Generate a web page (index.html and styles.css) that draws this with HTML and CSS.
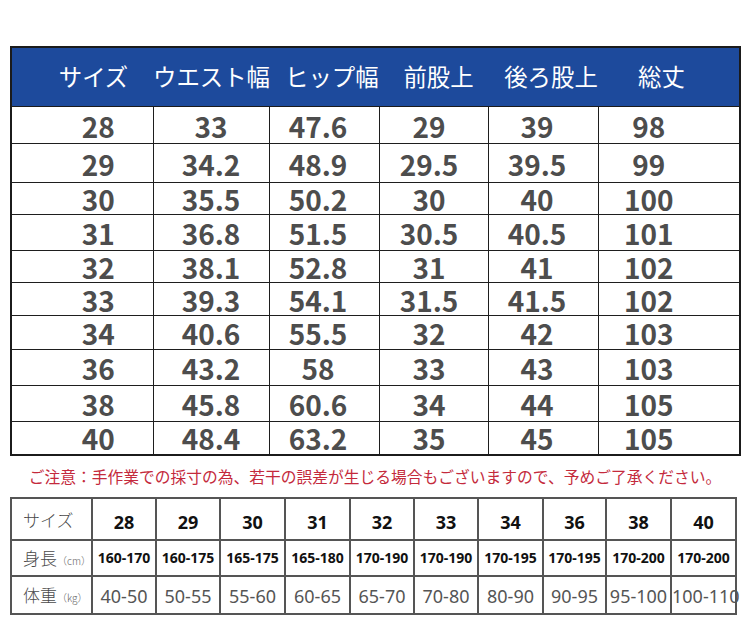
FILE: index.html
```html
<!DOCTYPE html>
<html lang="ja">
<head>
<meta charset="utf-8">
<title>サイズ表</title>
<link rel="stylesheet" href="styles.css">
</head>
<body>
<div class="page">
  <table class="chart">
    <colgroup>
      <col class="w1"><col class="w2"><col class="w3"><col class="w4"><col class="w5"><col class="w6">
    </colgroup>
    <thead>
      <tr><th>サイズ</th><th>ウエスト幅</th><th>ヒップ幅</th><th>前股上</th><th>後ろ股上</th><th>総丈</th></tr>
    </thead>
    <tbody>
      <tr><td>28</td><td>33</td><td>47.6</td><td>29</td><td>39</td><td>98</td></tr>
      <tr><td>29</td><td>34.2</td><td>48.9</td><td>29.5</td><td>39.5</td><td>99</td></tr>
      <tr><td>30</td><td>35.5</td><td>50.2</td><td>30</td><td>40</td><td>100</td></tr>
      <tr><td>31</td><td>36.8</td><td>51.5</td><td>30.5</td><td>40.5</td><td>101</td></tr>
      <tr><td>32</td><td>38.1</td><td>52.8</td><td>31</td><td>41</td><td>102</td></tr>
      <tr><td>33</td><td>39.3</td><td>54.1</td><td>31.5</td><td>41.5</td><td>102</td></tr>
      <tr><td>34</td><td>40.6</td><td>55.5</td><td>32</td><td>42</td><td>103</td></tr>
      <tr><td>36</td><td>43.2</td><td>58</td><td>33</td><td>43</td><td>103</td></tr>
      <tr><td>38</td><td>45.8</td><td>60.6</td><td>34</td><td>44</td><td>105</td></tr>
      <tr><td>40</td><td>48.4</td><td>63.2</td><td>35</td><td>45</td><td>105</td></tr>
    </tbody>
  </table>
  <p class="note">ご注意：手作業での採寸の為、若干の誤差が生じる場合もございますので、予めご了承ください。</p>
  <table class="fit">
    <colgroup>
      <col class="f0"><col class="f1"><col class="f1"><col class="f2"><col class="f2"><col class="f1"><col class="f1"><col class="f2"><col class="f3"><col class="f2"><col class="f2">
    </colgroup>
    <tr class="row-size">
      <th>サイズ</th><td>28</td><td>29</td><td>30</td><td>31</td><td>32</td><td>33</td><td>34</td><td>36</td><td>38</td><td>40</td>
    </tr>
    <tr class="row-height">
      <th>身長<span class="unit">（cm）</span></th><td>160-170</td><td>160-175</td><td>165-175</td><td>165-180</td><td>170-190</td><td>170-190</td><td>170-195</td><td>170-195</td><td>170-200</td><td>170-200</td>
    </tr>
    <tr class="row-weight">
      <th>体重<span class="unit">（kg）</span></th><td>40-50</td><td>50-55</td><td>55-60</td><td>60-65</td><td>65-70</td><td>70-80</td><td>80-90</td><td>90-95</td><td>95-100</td><td>100-110</td>
    </tr>
  </table>
</div>
</body>
</html>
```
FILE: styles.css
```css
html, body {
  margin: 0;
  padding: 0;
  background: #ffffff;
}

.page {
  width: 750px;
  padding: 46px 0 0 10px;
  box-sizing: border-box;
}

/* ---------- main size chart ---------- */
.chart {
  border-collapse: collapse;
  table-layout: fixed;
  width: 729px;
  border: 2px solid #1b1b1b;
  font-family: "Noto Sans CJK JP", "Noto Sans", sans-serif;
}

.chart .w1 { width: 142px; }
.chart .w2 { width: 116px; }
.chart .w3 { width: 110px; }
.chart .w4 { width: 109px; }
.chart .w5 { width: 110px; }
.chart .w6 { width: 142px; }

.chart thead th {
  background: #1d4a9c;
  color: #ffffff;
  font-weight: 400;
  font-size: 23.4px;
  line-height: 1;
  height: 58px;
  padding: 0;
  white-space: nowrap;
  text-align: center;
  border: none;
  border-bottom: 1.5px solid #1b1b1b;
  vertical-align: middle;
}

.chart thead th:nth-child(1) { padding-left: 22px; }
.chart thead th:nth-child(2) { padding-right: 2px; text-align: left; padding-left: 0; }
.chart thead th:nth-child(3) { padding-left: 16px; text-align: left; }
.chart thead th:nth-child(4) { padding-left: 10px; }
.chart thead th:nth-child(5) { padding-left: 16px; }
.chart thead th:nth-child(6) { padding-right: 14px; }

.chart tbody td {
  border: 1.5px solid #1e1e1e;
  color: #4d4d4d;
  font-weight: 700;
  font-size: 28px;
  line-height: 1;
  text-align: center;
  padding: 1px 0 0 0;
  white-space: nowrap;
  vertical-align: middle;
}

.chart tbody td:nth-child(1) { padding-left: 32px; }
.chart tbody td:nth-child(3) { padding-right: 12px; }
.chart tbody td:nth-child(4) { padding-right: 9px; }
.chart tbody td:nth-child(5) { padding-right: 12px; }
.chart tbody td:nth-child(6) { padding-right: 40px; }

.chart tbody tr:nth-child(1) { height: 37px; }
.chart tbody tr:nth-child(2) { height: 39px; }
.chart tbody tr:nth-child(3) { height: 32px; }
.chart tbody tr:nth-child(4) { height: 36px; }
.chart tbody tr:nth-child(5) { height: 32px; }
.chart tbody tr:nth-child(6) { height: 33px; }
.chart tbody tr:nth-child(7) { height: 34px; }
.chart tbody tr:nth-child(8) { height: 36px; }
.chart tbody tr:nth-child(9) { height: 36px; }
.chart tbody tr:nth-child(10) { height: 33px; }

/* ---------- note ---------- */
.note {
  margin: 0;
  width: 730px;
  height: 41px;
  line-height: 41px;
  text-align: center;
  color: #c42a3c;
  font-family: "Noto Sans CJK JP", sans-serif;
  font-size: 15.75px;
  font-weight: 400;
  white-space: nowrap;
}

/* ---------- fit chart ---------- */
.fit {
  border-collapse: collapse;
  table-layout: fixed;
  width: 725px;
  border: 2px solid #555555;
  font-family: "Noto Sans", "Noto Sans CJK JP", sans-serif;
}

.fit .f0 { width: 81px; }
.fit .f1 { width: 64px; }
.fit .f2 { width: 65px; }
.fit .f3 { width: 63px; }

.fit th,
.fit td {
  border: 2px solid #555555;
  padding: 0;
  white-space: nowrap;
  text-align: center;
  vertical-align: middle;
  line-height: 1;
}

.fit th {
  text-align: left;
  padding-left: 11px;
  font-family: "Noto Sans CJK JP", sans-serif;
  font-weight: 300;
  font-size: 17px;
  color: #4a4a4a;
}

.fit .unit {
  font-size: 10px;
  color: #666666;
}

.row-size { height: 42px; }
.row-height { height: 36px; }
.row-weight { height: 38px; }

.row-size td {
  font-weight: 700;
  font-size: 18px;
  color: #111111;
  padding-top: 6px;
}

.row-height td {
  font-weight: 700;
  font-size: 14px;
  color: #111111;
}

.row-weight td {
  font-weight: 400;
  font-size: 18px;
  color: #555555;
  padding-top: 2px;
}

.row-size th { padding-top: 2px; }
```
